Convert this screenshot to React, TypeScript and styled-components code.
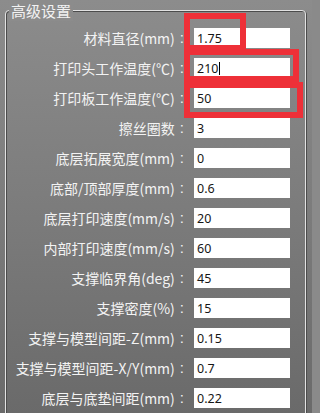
import React from "react";
import styled, { createGlobalStyle } from "styled-components";

const GlobalStyle = createGlobalStyle`
  html, body {
    margin: 0;
    padding: 0;
    width: 312px;
    height: 413px;
    overflow: hidden;
    background: #8a8a8a;
  }
  * { box-sizing: border-box; }
`;

const Page = styled.div`
  position: relative;
  width: 312px;
  height: 413px;
  overflow: hidden;
  background: linear-gradient(180deg, #8c8c8c 0%, #7c7c7c 50%, #6a6a6a 100%);
  padding: 0 6px 0 5px;
  font-family: "Noto Sans CJK SC", "Noto Sans", sans-serif;
`;

const Group = styled.fieldset`
  margin: 0;
  padding: 2px 0 20px 0;
  min-width: 0;
  border: 1px solid #e2e2e2;
  border-radius: 4px;
  box-shadow: inset 1px 1px 0 #4c4c4c, 1px 1px 0 #4c4c4c;
`;

const Legend = styled.legend`
  margin-left: 3px;
  padding: 0 2px;
  font-size: 15px;
  line-height: 21px;
  color: #f2f2f2;
  background: #8c8c8c;
`;

const Rows = styled.div`
  display: grid;
  grid-template-columns: 178px 96px;
  grid-auto-rows: 30px;
  column-gap: 10px;
  align-items: center;
`;

const Label = styled.div`
  justify-self: end;
  display: flex;
  align-items: center;
  white-space: nowrap;
  font-size: 14px;
  line-height: 30px;
  color: #f3f3f3;
`;

const Colon = styled.span`
  margin-left: 5px;
  font-family: "Liberation Sans", sans-serif;
  font-size: 15px;
`;

const Field = styled.div`
  height: 20px;
  background: #ffffff;
  padding-left: 3px;
  display: flex;
  align-items: center;
  font-family: "Noto Sans", sans-serif;
  font-size: 12.5px;
  color: #161616;
`;

const Caret = styled.span`
  display: inline-block;
  width: 1px;
  height: 13px;
  margin-left: 1px;
  background: #000;
`;

const Mark = styled.div<{ $x: number; $y: number; $w: number; $h: number }>`
  position: absolute;
  left: ${(p) => p.$x}px;
  top: ${(p) => p.$y}px;
  width: ${(p) => p.$w}px;
  height: ${(p) => p.$h}px;
  border: 6px solid #ee3038;
  pointer-events: none;
`;

type Row = { label: string; value: string; caret?: boolean };

const rows: Row[] = [
  { label: "材料直径(mm)", value: "1.75" },
  { label: "打印头工作温度(℃)", value: "210", caret: true },
  { label: "打印板工作温度(℃)", value: "50" },
  { label: "擦丝圈数", value: "3" },
  { label: "底层拓展宽度(mm)", value: "0" },
  { label: "底部/顶部厚度(mm)", value: "0.6" },
  { label: "底层打印速度(mm/s)", value: "20" },
  { label: "内部打印速度(mm/s)", value: "60" },
  { label: "支撑临界角(deg)", value: "45" },
  { label: "支撑密度(%)", value: "15" },
  { label: "支撑与模型间距-Z(mm)", value: "0.15" },
  { label: "支撑与模型间距-X/Y(mm)", value: "0.7" },
  { label: "底层与底垫间距(mm)", value: "0.22" },
];

export default function App() {
  return (
    <>
      <GlobalStyle />
      <Page>
        <Group>
          <Legend>高级设置</Legend>
          <Rows>
            {rows.map((r) => (
              <React.Fragment key={r.label}>
                <Label>
                  {r.label}
                  <Colon>:</Colon>
                </Label>
                <Field>
                  {r.value}
                  {r.caret && <Caret />}
                </Field>
              </React.Fragment>
            ))}
          </Rows>
        </Group>
        <Mark $x={184} $y={13} $w={62} $h={38} />
        <Mark $x={184} $y={49} $w={115} $h={33} />
        <Mark $x={184} $y={82} $w={119} $h={36} />
      </Page>
    </>
  );
}
